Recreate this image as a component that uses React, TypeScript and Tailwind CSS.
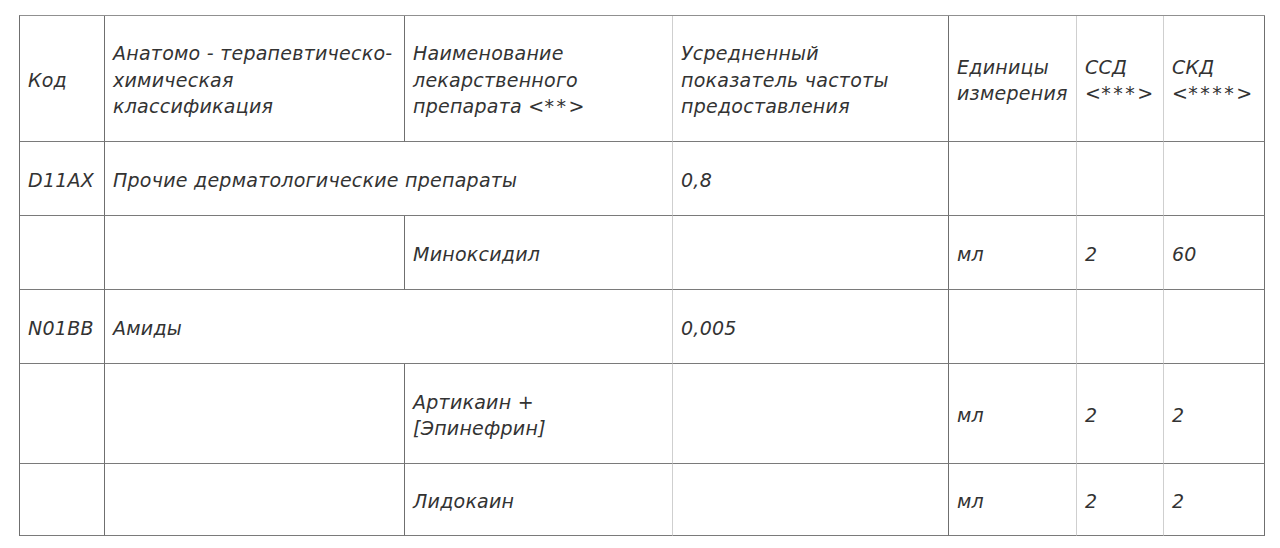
type Cell = { lines?: string[]; span?: number; light?: boolean };

const HEAD: Cell[] = [
  { lines: ["Код"] },
  { lines: ["Анатомо - терапевтическо-", "химическая", "классификация"] },
  { lines: ["Наименование", "лекарственного", "препарата <**>"], light: true },
  { lines: ["Усредненный", "показатель частоты", "предоставления"] },
  { lines: ["Единицы", "измерения"], light: true },
  { lines: ["ССД", "<***>"], light: true },
  { lines: ["СКД", "<****>"] },
];

const ROWS: { h: string; cells: Cell[] }[] = [
  {
    h: "h-[74px]",
    cells: [
      { lines: ["D11AX"] },
      { lines: ["Прочие дерматологические препараты"], span: 2, light: true },
      { lines: ["0,8"] },
      { light: true },
      { light: true },
      {},
    ],
  },
  {
    h: "h-[74px]",
    cells: [
      {},
      {},
      { lines: ["Миноксидил"], light: true },
      {},
      { lines: ["мл"], light: true },
      { lines: ["2"], light: true },
      { lines: ["60"] },
    ],
  },
  {
    h: "h-[74px]",
    cells: [
      { lines: ["N01BB"] },
      { lines: ["Амиды"], span: 2, light: true },
      { lines: ["0,005"] },
      { light: true },
      { light: true },
      {},
    ],
  },
  {
    h: "h-[100px]",
    cells: [
      {},
      {},
      { lines: ["Артикаин +", "[Эпинефрин]"], light: true },
      {},
      { lines: ["мл"], light: true },
      { lines: ["2"], light: true },
      { lines: ["2"] },
    ],
  },
  {
    h: "h-[72px]",
    cells: [
      {},
      {},
      { lines: ["Лидокаин"], light: true },
      {},
      { lines: ["мл"], light: true },
      { lines: ["2"], light: true },
      { lines: ["2"] },
    ],
  },
];

// Verdana's asterisks are wider than DejaVu's, so spread them a little
function Line({ text }: { text: string }) {
  const m = text.match(/^(.*<)(\*+)(>)$/);
  if (!m) return <div>{text}</div>;
  return (
    <div>
      {m[1]}
      <span className="tracking-[2.5px]">{m[2]}</span>
      {m[3]}
    </div>
  );
}

function Td({ c }: { c: Cell }) {
  return (
    <td
      colSpan={c.span}
      className={
        "border-r border-b border-b-[#7a7a7a] px-2 pt-[3px] align-middle whitespace-nowrap " +
        (c.light ? "border-r-[#cfcfcf]" : "border-r-[#6f6f6f]")
      }
    >
      {c.lines?.map((l, i) => (
        <Line key={i} text={l} />
      ))}
    </td>
  );
}

export default function App() {
  return (
    <div
      className="min-h-[548px] w-[1280px] bg-white pl-[19px] pt-[15px] text-[19px] italic leading-[26.5px] tracking-[0.25px] text-[#333333]"
      style={{ fontFamily: '"DejaVu Sans", Verdana, sans-serif' }}
    >
      <table className="w-[1245px] table-fixed border-separate border-spacing-0 border-l border-t border-l-[#6f6f6f] border-t-[#909090]">
        <colgroup>
          <col className="w-[85px]" />
          <col className="w-[300px]" />
          <col className="w-[268px]" />
          <col className="w-[276px]" />
          <col className="w-[128px]" />
          <col className="w-[87px]" />
          <col className="w-[101px]" />
        </colgroup>
        <thead>
          <tr className="h-[126px] text-left">
            {HEAD.map((c, i) => (
              <Td key={i} c={c} />
            ))}
          </tr>
        </thead>
        <tbody>
          {ROWS.map((r, i) => (
            <tr key={i} className={r.h}>
              {r.cells.map((c, j) => (
                <Td key={j} c={c} />
              ))}
            </tr>
          ))}
        </tbody>
      </table>
    </div>
  );
}
